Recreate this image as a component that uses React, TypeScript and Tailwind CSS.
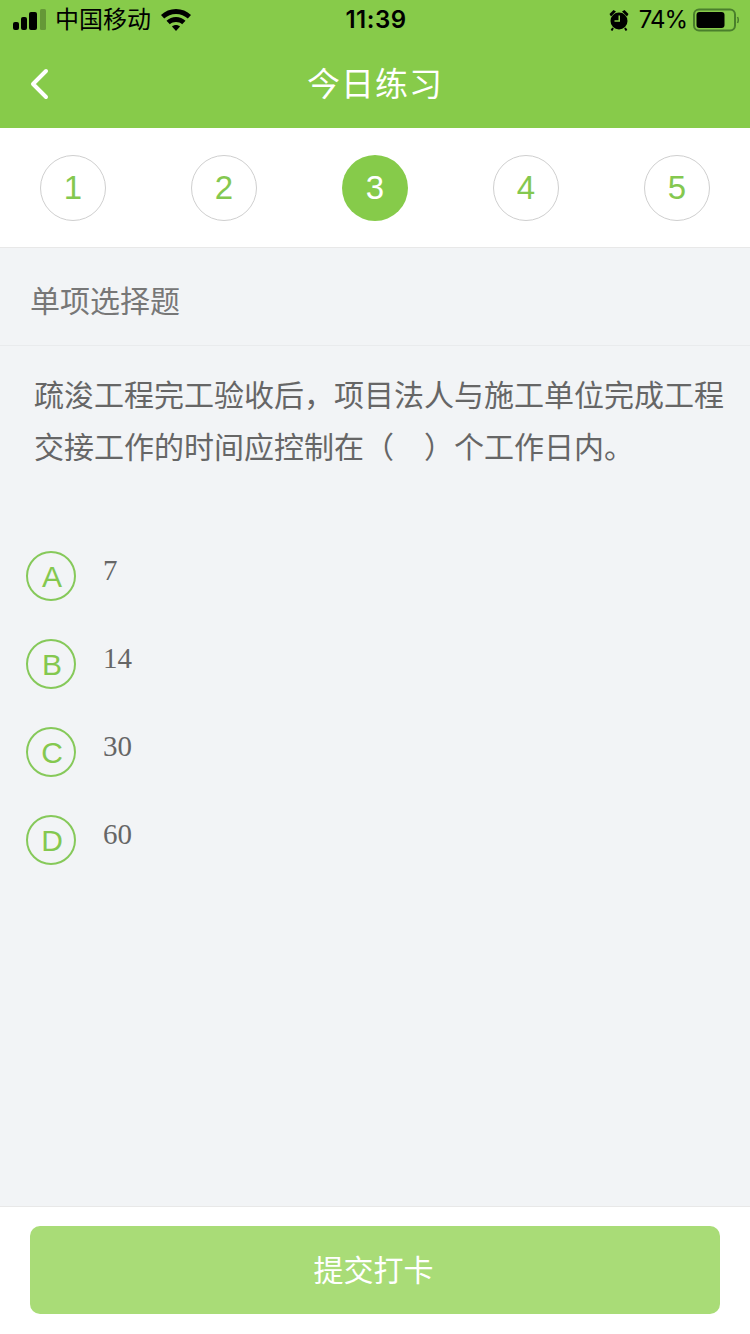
const cjk = "font-['Liberation_Sans','Noto_Sans_CJK_SC',sans-serif]";

function Step({ n, active }: { n: number; active?: boolean }) {
  return (
    <div
      className={
        active
          ? "flex h-[66px] w-[66px] items-center justify-center rounded-full bg-[#86cb4a] text-[33px] text-white"
          : "flex h-[66px] w-[66px] items-center justify-center rounded-full border border-[#cfcfcf] bg-white text-[33px] text-[#84c84f]"
      }
    >
      {n}
    </div>
  );
}

function Option({ letter, text }: { letter: string; text: string }) {
  return (
    <div className="flex h-[88px] items-start pl-[26px]">
      <div className="flex h-[50px] w-[50px] items-center justify-center rounded-full border-2 border-[#86c95a] pl-[2px] pt-[1px] text-[30px] text-[#84c84f]">
        {letter}
      </div>
      <div className="ml-[27px] mt-[1px] font-['Liberation_Serif',serif] text-[29px] leading-[36px] text-[#666666]">
        {text}
      </div>
    </div>
  );
}

export default function App() {
  return (
    <div className={`${cjk} flex h-[1334px] w-[750px] flex-col overflow-hidden bg-[#f2f4f6]`}>
      <header className="h-[128px] shrink-0 bg-[#87cb4a]">
        <div className="flex h-[40px] items-center text-black">
          <div className="flex flex-1 items-center pl-[13px]">
            <svg width="33" height="22" viewBox="0 0 33 22">
              <rect x="0" y="13" width="6" height="8" rx="2" fill="#000" />
              <rect x="8" y="8" width="6" height="13" rx="2" fill="#000" />
              <rect x="16" y="3" width="8" height="18" rx="2" fill="#000" />
              <rect x="27" y="0" width="6" height="21" rx="1.500" fill="#000" opacity="0.25" />
            </svg>
            <span className="ml-[9px] text-[24px] leading-none">中国移动</span>
            <svg className="ml-[10px]" width="30" height="23" viewBox="0 0 30 23" fill="#000">
              <path d="M15 0C20.800 0 26 2.300 30 6L26.800 9.600C23.700 6.800 19.600 5 15 5C10.400 5 6.300 6.800 3.200 9.600L0 6C4 2.300 9.200 0 15 0Z" />
              <path d="M15 8C18.600 8 21.900 9.400 24.500 11.700L21.200 15.300C19.500 13.800 17.400 13 15 13C12.600 13 10.500 13.800 8.800 15.300L5.500 11.700C8.100 9.400 11.400 8 15 8Z" />
              <path d="M15 16C16.500 16 17.900 16.500 19 17.500L15 22L11 17.500C12.100 16.500 13.500 16 15 16Z" />
            </svg>
          </div>
          <div className="font-['Inter',sans-serif] text-[24px] font-semibold leading-[28px] tracking-[0.5px]">
            11:39
          </div>
          <div className="flex flex-1 items-center justify-end pr-[11px]">
            <svg width="20" height="22" viewBox="0 0 20 22" fill="#000">
              <circle cx="10" cy="12" r="8.500" />
              <path d="M0.500 5L4.500 1L7 2.500L2 7.500ZM19.500 5L15.500 1L13 2.500L18 7.500Z" />
              <path d="M9.500 6.500H11V12.800H5.500V11.300H9.500Z" fill="#87cb4a" />
              <path d="M4 19L2.500 21.500M16 19L17.500 21.500" stroke="#000" strokeWidth="2" />
            </svg>
            <span className="ml-[10px] font-['Inter',sans-serif] text-[24px] leading-none tracking-[-1px]">74%</span>
            <svg className="ml-[6px]" width="46" height="24" viewBox="0 0 46 24">
              <rect x="1" y="1.500" width="41" height="21" rx="5" fill="none" stroke="#4a7f2c" strokeWidth="2" />
              <rect x="3.500" y="4" width="28" height="16" rx="3" fill="#000" />
              <path d="M44.500 9C45.300 10.500 45.300 13.500 44.500 15" stroke="#4a7f2c" strokeWidth="1.500" fill="none" />
            </svg>
          </div>
        </div>
        <div className="relative flex h-[88px] items-center justify-center pt-[1px]">
          <svg className="absolute left-[28px] top-[27px]" width="22" height="34" viewBox="0 0 22 34" fill="none">
            <path d="M18 4L5 17L18 30" stroke="#fff" strokeWidth="4" strokeLinecap="round" strokeLinejoin="round" />
          </svg>
          <h1 className="text-[33px] font-normal leading-none tracking-[1px] text-white">今日练习</h1>
        </div>
      </header>

      <div className="flex h-[120px] shrink-0 items-center justify-between border-b border-[#e8e8e8] bg-white px-[40px]">
        <Step n={1} />
        <Step n={2} />
        <Step n={3} active />
        <Step n={4} />
        <Step n={5} />
      </div>

      <div className="flex h-[98px] shrink-0 items-center border-b border-[#e9ebed] pl-[30px] pt-[10px] text-[30px] text-[#777777]">
        单项选择题
      </div>

      <p className="shrink-0 pl-[34px] pt-[24px] text-[30px] leading-[52px] text-[#666666]">
        疏浚工程完工验收后，项目法人与施工单位完成工程
        <br />
        交接工作的时间应控制在（　）个工作日内。
      </p>

      <div className="mt-[77px] flex-1">
        <Option letter="A" text="7" />
        <Option letter="B" text="14" />
        <Option letter="C" text="30" />
        <Option letter="D" text="60" />
      </div>

      <footer className="h-[128px] shrink-0 border-t border-[#e8e8e8] bg-white px-[30px] pt-[19px]">
        <button className="flex h-[88px] w-full items-center justify-center rounded-[10px] bg-[#a9dc77] pr-[3px] pt-[1px] text-[30px] text-white">
          提交打卡
        </button>
      </footer>
    </div>
  );
}
